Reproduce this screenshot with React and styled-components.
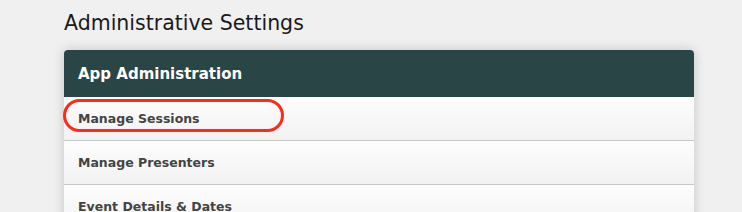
import React from 'react';
import styled, { createGlobalStyle } from 'styled-components';

const GlobalStyle = createGlobalStyle`
  html, body {
    margin: 0;
    padding: 0;
    background: #f0f0f0;
    font-family: "DejaVu Sans", "Liberation Sans", sans-serif;
  }
`;

const items = ['Manage Sessions', 'Manage Presenters', 'Event Details & Dates'];

const App = () => (
  <>
    <GlobalStyle />
    <Page>
      <Title>Administrative Settings</Title>
      <Panel>
        <PanelHeader>App Administration</PanelHeader>
        {items.map((label, i) => (
          <Row key={label}>
            {label}
            {i === 0 && <Highlight />}
          </Row>
        ))}
      </Panel>
    </Page>
  </>
);

export default App;

const Page = styled.div`
  padding: 10px 48px 0 64px;
`;

const Title = styled.h1`
  margin: 0 0 14px;
  font-size: 20.5px;
  font-weight: normal;
  line-height: 26px;
  color: #1a1a1a;
`;

const Panel = styled.div`
  width: 630px;
  border-radius: 4px 4px 0 0;
  background: #fafafa;
  box-shadow: 0 0 12px rgba(0, 0, 0, 0.18);
`;

const PanelHeader = styled.div`
  height: 47px;
  display: flex;
  align-items: center;
  padding: 0 14px;
  border-radius: 4px 4px 0 0;
  background: #2a4545;
  color: #ffffff;
  font-size: 15px;
  font-weight: bold;
`;

const Row = styled.div`
  position: relative;
  height: 43px;
  display: flex;
  align-items: center;
  padding: 0 14px;
  border-bottom: 1px solid #c8c8c8;
  background: linear-gradient(#fdfdfd, #f2f2f2);
  color: #444;
  font-size: 12.5px;
  font-weight: bold;
`;

const Highlight = styled.span`
  position: absolute;
  left: -1px;
  top: 2px;
  width: 215px;
  height: 27px;
  border: 3px solid #ff2a1a;
  border-radius: 17px;
  pointer-events: none;
`;
